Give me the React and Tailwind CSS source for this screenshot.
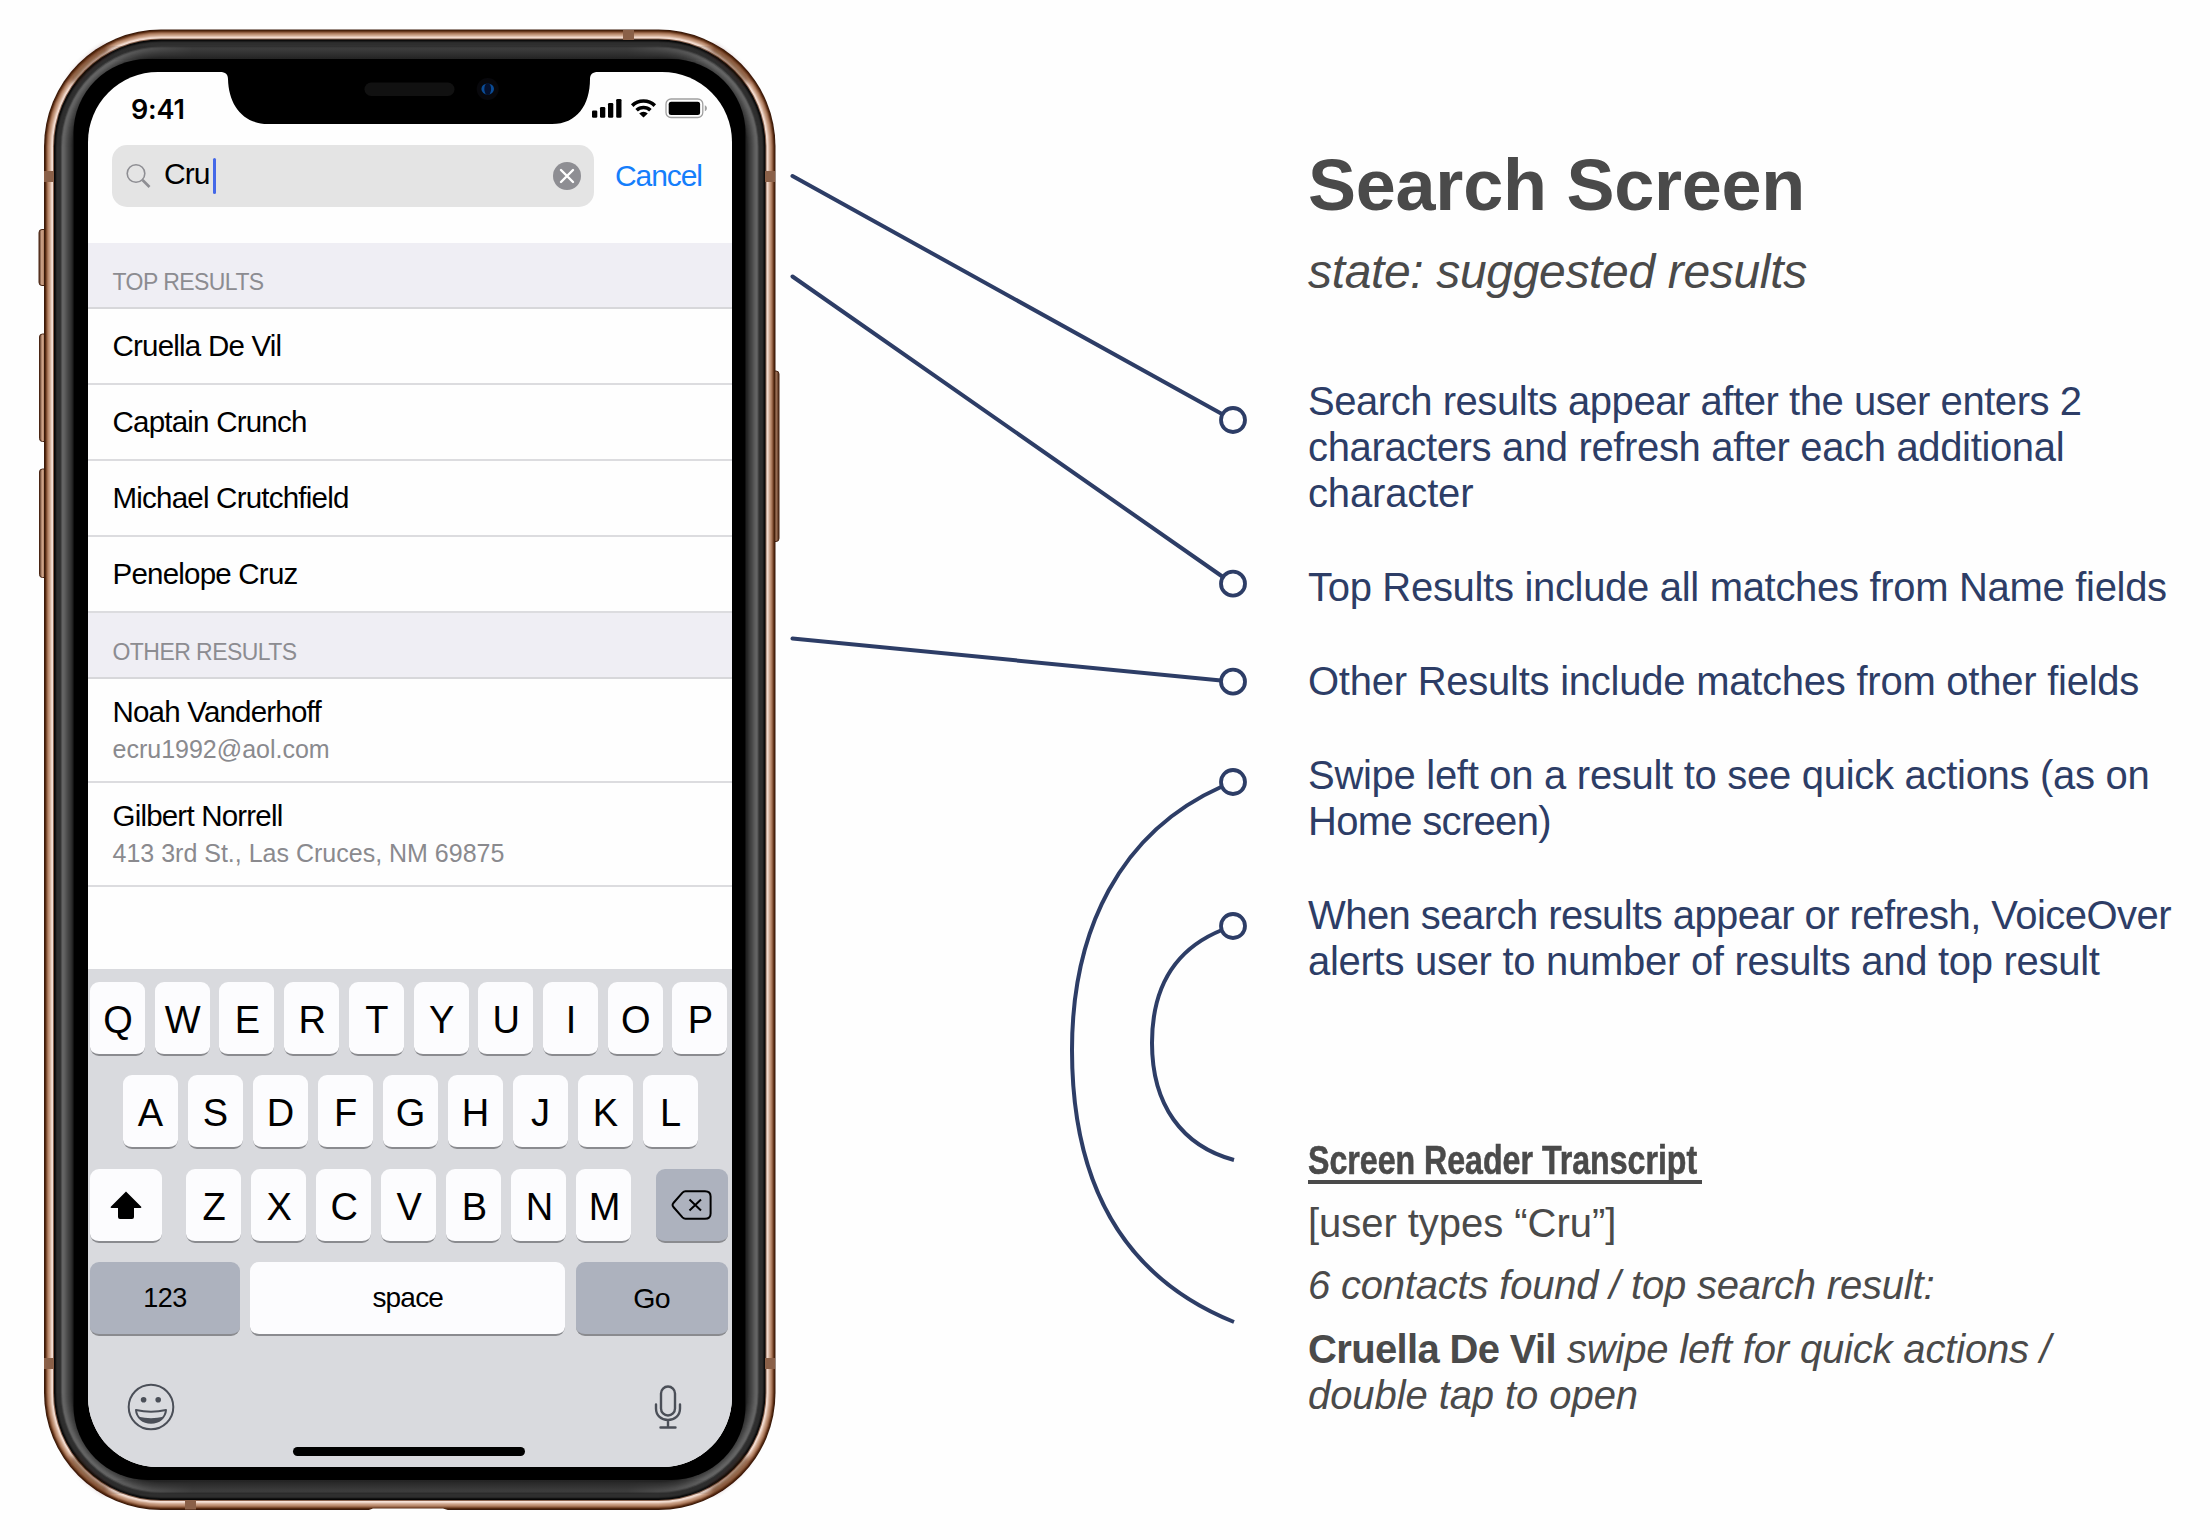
import React from "react";

const RINGS = [
  [0, "#3a1a0b"],
  [1, "#54290f"],
  [2, "#7d4c31"],
  [3, "#a06f52"],
  [4, "#b98a6d"],
  [5, "#c79d83"],
  [6, "#d8b5a0"],
  [7, "#ecd2c4"],
  [8, "#f3dfd5"],
  [9, "#8a6450"],
  [10, "#060606"],
  [11, "#121212"],
  [12, "#262626"],
  [13, "#2e2e2e"],
  [14, "#2f2f2f"],
  [15, "#2f2f2f"],
  [16, "#343434"],
  [17, "#4e4e4e"],
  [18, "#646464"],
  [19, "#646464"],
  [20, "#5f5f5f"],
  [21, "#585858"],
  [22, "#505050"],
  [23, "#494949"],
  [24, "#424242"],
  [25, "#3c3c3c"],
  [26, "#353535"],
  [27, "#2d2d2d"],
  [28, "#222222"],
];

function DeviceFrame() {
  return (
    <svg className="absolute left-0 top-0" width="792" height="1540" viewBox="0 0 792 1540" fill="none">
      <defs>
        <linearGradient id="leftButton" x1="0" x2="1" y1="0" y2="0">
          <stop offset="0" stopColor="#4a2614" />
          <stop offset="0.3" stopColor="#d0a68c" />
          <stop offset="0.6" stopColor="#a87a5d" />
          <stop offset="1" stopColor="#6b3e26" />
        </linearGradient>
        <linearGradient id="rightButton" x1="0" x2="1" y1="0" y2="0">
          <stop offset="0" stopColor="#6b3e26" />
          <stop offset="0.6" stopColor="#b98a6c" />
          <stop offset="1" stopColor="#4a2614" />
        </linearGradient>
        <linearGradient id="dim" x1="0" x2="1" y1="0" y2="0">
          <stop offset="0" stopColor="#262626" stopOpacity="0" />
          <stop offset="0.15" stopColor="#262626" stopOpacity="0.65" />
          <stop offset="0.85" stopColor="#262626" stopOpacity="0.65" />
          <stop offset="1" stopColor="#262626" stopOpacity="0" />
        </linearGradient>
        <filter id="soft" x="-30%" y="-30%" width="160%" height="160%">
          <feGaussianBlur stdDeviation="3" />
        </filter>
      </defs>
      <g strokeWidth="1" stroke="#4a2614">
        <rect x="39" y="229.5" width="9" height="56" rx="3" fill="url(#leftButton)" />
        <rect x="39.500" y="334" width="9" height="107.500" rx="3" fill="url(#leftButton)" />
        <rect x="39.500" y="469" width="9" height="108.500" rx="3" fill="url(#leftButton)" />
        <rect x="770" y="371" width="9" height="170.500" rx="3" fill="url(#rightButton)" />
      </g>
      {RINGS.map(([i, c]) => (
        <rect key={i} x={44 + i} y={29.5 + i} width={731.5 - 2 * i} height={1480.5 - 2 * i} rx={117 - i} fill={c} />
      ))}
      <rect x="100" y="46" width="620" height="14" fill="url(#dim)" />
      <rect x="100" y="1480" width="620" height="14" fill="url(#dim)" />
      <rect x="73.500" y="59" width="672" height="1421" rx="74" fill="#000" />
      <g stroke="#4a1e06" strokeWidth="5" opacity="0.8" filter="url(#soft)">
        <path d="M72 82A114 114 0 0 1 108 48" />
        <path d="M747 82A114 114 0 0 0 711 48" />
        <path d="M72 1457A114 114 0 0 0 108 1491" />
        <path d="M747 1457A114 114 0 0 1 711 1491" />
      </g>
      <g fill="#8a6048">
        <rect x="44" y="171" width="10" height="11" />
        <rect x="765" y="171" width="10" height="11" />
        <rect x="44" y="1358" width="10" height="11" />
        <rect x="765" y="1358" width="10" height="11" />
        <rect x="623" y="30" width="11" height="10" />
        <rect x="185" y="1500" width="11" height="9.5" />
      </g>
      <path d="M366 1511L373 1508.500H443L451 1511Z" fill="#fefefe" />
    </svg>
  );
}

function Notch() {
  return (
    <svg className="absolute left-[128.500px] top-0" width="382" height="54" viewBox="216 72 382 54" fill="none">
      <path
        d="M216 71V72H220C225.500 72 228 74.500 228 79C228.500 105 243 124 268 124H552C577 124 590 105 590 79C590 74.500 592.500 72 598 72V71Z"
        fill="#000"
      />
      <rect x="364.500" y="82.500" width="90" height="13.500" rx="6.750" fill="#111" />
      <circle cx="487.700" cy="89" r="11" fill="#08080c" />
      <ellipse cx="487.700" cy="89" rx="6.300" ry="5.500" fill="#0b4c96" />
      <ellipse cx="487.700" cy="89" rx="3.400" ry="6" fill="#04102e" />
    </svg>
  );
}

function StatusIcons() {
  return (
    <svg width="118" height="22" viewBox="591 97 118 22" fill="none">
      <g fill="#000">
        <rect x="592" y="110.500" width="5.300" height="7.200" rx="1.300" />
        <rect x="600" y="107" width="5.300" height="10.700" rx="1.300" />
        <rect x="608" y="103" width="5.300" height="14.700" rx="1.300" />
        <rect x="616.200" y="99" width="5.300" height="18.700" rx="1.300" />
      </g>
      <g stroke="#000" strokeWidth="3.600">
        <path d="M632.200 105.600A16.200 16.200 0 0 1 654.800 105.600" />
        <path d="M636.600 110.300A10 10 0 0 1 650.400 110.300" />
      </g>
      <path d="M639.200 113.400A6.200 6.200 0 0 1 647.800 113.400L643.500 117.600Z" fill="#000" />
      <rect x="666" y="99" width="36.800" height="18.500" rx="5" stroke="#a0a0a0" strokeWidth="1.300" />
      <rect x="668.700" y="101.700" width="31.400" height="13.200" rx="2.500" fill="#000" />
      <path d="M704.800 105.300C707.600 106.300 707.600 110.300 704.800 111.300Z" fill="#a0a0a0" />
    </svg>
  );
}

function SectionHeader({ children, className }) {
  return (
    <div className={`flex shrink-0 border-b-2 border-[#d7d7da] bg-[#efeef4] pl-[25px] pt-[27px] ${className}`}>
      <span className="text-[23px] leading-6 tracking-[-0.550px] text-[#8c8c91]">{children}</span>
    </div>
  );
}

const topResults = ["Cruella De Vil", "Captain Crunch", "Michael Crutchfield", "Penelope Cruz"];

const otherResults = [
  ["Noah Vanderhoff", "ecru1992@aol.com"],
  ["Gilbert Norrell", "413 3rd St., Las Cruces, NM 69875"],
];

function Key({ children, className = "w-[55px] bg-[#fcfcfe] pt-[4px] pl-[1px] text-[38px]" }) {
  return (
    <div
      className={`flex h-[74px] shrink-0 items-center justify-center rounded-[9px] border-b-2 border-[#8a8b8f] leading-none text-black ${className}`}
    >
      {children}
    </div>
  );
}

function Keyboard() {
  return (
    <div className="flex h-[498px] shrink-0 flex-col bg-[#d9dade] pt-[13px]">
      <div className="flex flex-col gap-[19.400px] pl-[2.500px] pr-[4px]">
        <div className="flex justify-between">
          {"QWERTYUIOP".split("").map((k) => (
            <Key key={k}>{k}</Key>
          ))}
        </div>
        <div className="flex justify-between pl-[32.500px] pr-[30px]">
          {"ASDFGHJKL".split("").map((k) => (
            <Key key={k}>{k}</Key>
          ))}
        </div>
        <div className="flex justify-between">
          <Key className="w-[72px] bg-[#fcfcfe]">
            <svg width="34" height="30" viewBox="0 0 34 30">
              <path d="M17 1.500L32 16.500C32.700 17.300 32.400 17.900 31.500 17.900H25V27Q25 29 23 29H11Q9 29 9 27V17.900H2.500C1.600 17.900 1.300 17.300 2 16.500Z" fill="#000" />
            </svg>
          </Key>
          <div className="flex w-[445.500px] justify-between">
            {"ZXCVBNM".split("").map((k) => (
              <Key key={k}>{k}</Key>
            ))}
          </div>
          <Key className="w-[72px] bg-[#adb2be] pl-[1px]">
            <svg width="42" height="30" viewBox="0 0 42 30" fill="none" stroke="#000" strokeWidth="2">
              <path d="M14.500 1.200H34Q39.600 1.200 39.600 6.500V23.500Q39.600 28.800 34 28.800H14.500Q12.800 28.800 11.500 27.400L2.400 17Q.8 15 2.400 13L11.500 2.600Q12.800 1.200 14.500 1.200Z" />
              <path d="M18.500 9.500L30 20.500M30 9.500L18.500 20.500" />
            </svg>
          </Key>
        </div>
        <div className="flex justify-between">
          <Key className="w-[150px] bg-[#adb2be] text-[27px] tracking-[-0.500px]">123</Key>
          <Key className="w-[315px] bg-[#fcfcfe] text-[28px] tracking-[-0.800px]">space</Key>
          <Key className="w-[152px] bg-[#adb2be] text-[28.500px] tracking-[-0.800px]">Go</Key>
        </div>
      </div>
      <div className="mt-[47px] flex justify-between pl-[39.500px] pr-[49.500px]">
        <svg width="48" height="48" viewBox="0 0 48 48" fill="none" stroke="#4b4f58" strokeWidth="2">
          <circle cx="24" cy="24" r="22.300" />
          <circle cx="16.600" cy="16.800" r="2.800" fill="#4b4f58" stroke="none" />
          <circle cx="31.200" cy="16.800" r="2.800" fill="#4b4f58" stroke="none" />
          <path d="M9 27Q24 30.500 39 27C38.500 34.500 32 39.800 24 39.800S9.500 34.500 9 27Z" strokeLinejoin="round" />
          <path d="M11.500 33.800Q24 36.500 36.500 33.800C33.500 38 29.500 39.800 24 39.800S14.500 38 11.500 33.800Z" fill="#4b4f58" stroke="none" />
        </svg>
        <svg width="28" height="48" viewBox="0 0 28 48" fill="none" stroke="#4b4f58" strokeWidth="2.400" strokeLinecap="round">
          <rect x="7" y="3.500" width="14" height="29" rx="7" />
          <path d="M2 21.500V25.500C2 32.500 7.300 37 14 37S26 32.500 26 25.500V21.500M14 37V44M6.500 44.500H21.500" />
        </svg>
      </div>
      <div className="mt-[16px] ml-[205.500px] h-[9px] w-[232px] rounded-full bg-black" />
    </div>
  );
}

function Phone() {
  return (
    <div className="relative h-[1540px] w-[792px] shrink-0 pl-[87.500px] pt-[72px]">
      <DeviceFrame />
      <div className="relative flex h-[1395px] w-[644px] flex-col overflow-hidden rounded-[70px] bg-[#fefefe]">
        <Notch />
        <div className="flex h-[73px] shrink-0 justify-between pl-[43.500px] pr-[22.500px] pt-[25px]">
          <span className="font-['Inter'] text-[27px] font-semibold leading-[25px] tracking-[-0.200px] text-black">9:41</span>
          <StatusIcons />
        </div>
        <div className="flex h-[98px] shrink-0 items-start pl-[24.500px]">
          <div className="flex h-[62px] w-[482px] items-center rounded-[15px] bg-[#e4e4e4] pl-[13.500px] pr-[13px]">
            <svg width="26" height="26" viewBox="0 0 26 26" fill="none" stroke="#8e8e93">
              <circle cx="10" cy="10.500" r="8.800" strokeWidth="1.600" />
              <path d="M16.500 17L23.500 24" strokeWidth="2.600" />
            </svg>
            <span className="ml-[12.500px] pb-[4px] text-[30px] leading-9 tracking-[-1px] text-black">Cru</span>
            <span className="ml-[3.500px] h-[36px] w-[3.500px] rounded-sm bg-[#4468e8]" />
            <svg className="ml-auto" width="28" height="28" viewBox="0 0 28 28">
              <circle cx="14" cy="14" r="14" fill="#8e8e93" />
              <path d="M8 8L20 20M20 8L8 20" stroke="#fff" strokeWidth="2.400" strokeLinecap="round" />
            </svg>
          </div>
          <span className="ml-[21px] mt-[13px] text-[30px] leading-9 tracking-[-1.100px] text-[#157efb]">Cancel</span>
        </div>

        <SectionHeader className="h-[66px]">TOP RESULTS</SectionHeader>
        {topResults.map((name) => (
          <div key={name} className="flex h-[76px] shrink-0 items-center border-b-2 border-[#dcdcdf] pb-[1px] pl-[25px]">
            <span className="text-[29.500px] leading-9 tracking-[-0.780px] text-black">{name}</span>
          </div>
        ))}
        <SectionHeader className="h-[66px]">OTHER RESULTS</SectionHeader>
        {otherResults.map(([name, detail]) => (
          <div key={name} className="flex h-[104px] shrink-0 flex-col border-b-2 border-[#dcdcdf] pl-[25px] pt-[15.500px]">
            <span className="text-[29.500px] leading-[34px] tracking-[-0.800px] text-black">{name}</span>
            <span className="mt-[5px] text-[25px] leading-[30px] text-[#8a8a8e]">{detail}</span>
          </div>
        ))}
        <div className="flex-1" />
        <Keyboard />
      </div>
    </div>
  );
}

function Connectors() {
  const dots = [420, 583.7, 681.7, 782, 926];
  return (
    <svg className="shrink-0" width="516" height="1540" viewBox="792 0 516 1540" fill="none" stroke="#2d3d66" strokeWidth="4" overflow="visible">
      <g strokeLinecap="round">
        <path d="M792.500 176L1222 414" />
        <path d="M792.500 276.500L1223 577" />
        <path d="M792.500 638.500L1221 680.500" />
      </g>
      <path d="M1222 786.500C1120 832 1072 930 1072 1050C1072 1180 1120 1276 1234 1322" />
      <path d="M1222 930C1175 949 1152 988 1152 1043C1152 1105 1182 1146 1234 1160" />
      {dots.map((y) => (
        <circle key={y} cx="1233" cy={y} r="12" fill="#fefefe" strokeWidth="3.800" />
      ))}
    </svg>
  );
}

const notes = [
  [
    ["Search results appear after the user enters 2", "tracking-[-0.450px]"],
    ["characters and refresh after each additional", "tracking-[-0.350px]"],
    ["character", "tracking-[-0.150px]"],
  ],
  [["Top Results include all matches from Name fields", "tracking-[-0.310px]"]],
  [["Other Results include matches from other fields", "tracking-[-0.245px]"]],
  [
    ["Swipe left on a result to see quick actions (as on", "tracking-[-0.290px]"],
    ["Home screen)", "tracking-[-0.700px]"],
  ],
  [
    ["When search results appear or refresh, VoiceOver", "tracking-[-0.550px]"],
    ["alerts user to number of results and top result", "tracking-[-0.280px]"],
  ],
];

function Annotations() {
  return (
    <div className="flex h-[1540px] w-[902px] shrink-0 flex-col whitespace-nowrap text-[#4a4a4a]">
      <h1 className="mt-[145px] text-[72px] font-bold leading-[80px] tracking-[-0.250px]">Search Screen</h1>
      <p className="mt-[18px] text-[48px] italic leading-[58px] tracking-[-0.340px]">state: suggested results</p>
      <div className="mt-[77px] flex flex-col gap-[48px] text-[40px] leading-[46px] text-[#2d3d66]">
        {notes.map((lines) => (
          <p key={lines[0][0]}>
            {lines.map(([text, track]) => (
              <span key={text} className={`block ${track}`}>
                {text}
              </span>
            ))}
          </p>
        ))}
      </div>
      <div className="mt-[153px] w-[394px] border-b-4 border-[#4a4a4a]">
        <h2 className="h-[43px] origin-left scale-x-[0.803] text-[40px] font-bold leading-[46px] [-webkit-text-stroke:0.600px_#4a4a4a]">
          Screen Reader Transcript
        </h2>
      </div>
      <div className="text-[40px] leading-[46px]">
        <p className="mt-[16px] tracking-[-0.040px]">[user types “Cru”]</p>
        <p className="mt-[16px] italic tracking-[-0.200px]">6 contacts found / top search result:</p>
        <p className="mt-[18px]">
          <span className="block">
            <b className="tracking-[-0.650px]">Cruella De Vil</b>
            <i className="tracking-[-0.180px]"> swipe left for quick actions /</i>
          </span>
          <i className="block tracking-[-0.080px]">double tap to open</i>
        </p>
      </div>
    </div>
  );
}

export default function App() {
  return (
    <main className="flex h-[1540px] w-[2210px] overflow-hidden bg-[#fefefe] font-['Liberation_Sans',Arial,sans-serif]">
      <Phone />
      <Connectors />
      <Annotations />
    </main>
  );
}
